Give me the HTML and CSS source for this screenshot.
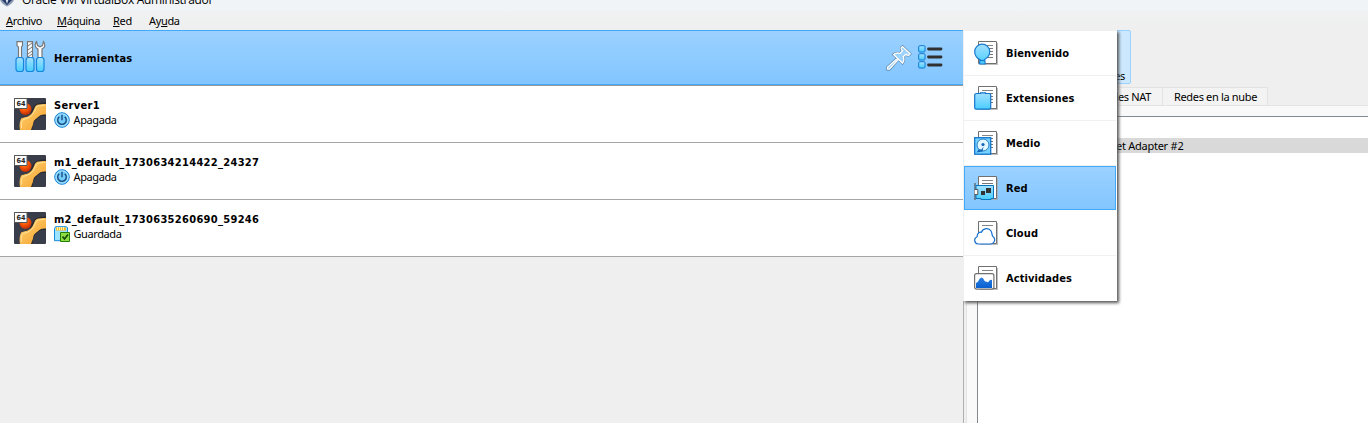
FILE: index.html
```html
<!DOCTYPE html>
<html lang="es">
<head>
<meta charset="utf-8">
<title>Oracle VM VirtualBox Administrador</title>
<link rel="stylesheet" href="styles.css">
</head>
<body>
<svg class="defs" width="0" height="0">
  <defs>
    <linearGradient id="aqua" x1="0" y1="0" x2="0" y2="1"><stop offset="0" stop-color="#a4e0ff"/><stop offset="1" stop-color="#48ceff"/></linearGradient>
    <linearGradient id="gold" x1="0" y1="0" x2="1" y2="1"><stop offset="0" stop-color="#ffd879"/><stop offset="1" stop-color="#f59d28"/></linearGradient>
    <linearGradient id="wave" x1="0" y1="0" x2="0" y2="1"><stop offset="0" stop-color="#2b7de0"/><stop offset="1" stop-color="#0860d0"/></linearGradient>
    <radialGradient id="ball" cx=".4" cy=".3" r=".7"><stop offset="0" stop-color="#ff9a3e"/><stop offset=".5" stop-color="#fb5607"/><stop offset="1" stop-color="#bd2f05"/></radialGradient>
    <symbol id="page" viewBox="0 0 24 24">
      <path d="M6 2h18v22H6z" fill="#aaa" opacity=".75"/>
      <path d="M4.500 .5h18v22h-18z" fill="#fff" stroke="#707070"/>
      <path d="M8 4.500h11" stroke="#858585"/>
    </symbol>
    <symbol id="os" viewBox="0 0 32 32">
      <rect width="32" height="32" rx="1" fill="#393d49"/>
      <circle cx="11.500" cy="11" r="6" fill="url(#ball)"/>
      <path d="M6 32C5 24 7 20 12 19C17 18 17 12 20 8C23 5 28 4.500 32 4.500V18C27 17 25 19 22 22C18 25 20 28 18 32Z" fill="#191b20" opacity=".6"/>
      <path d="M6 32C5 27 6 21 8 20C12 19 15 19 18 15C21 11 20 7 25 6.500C28 6 30 6 32 6V16.500C28 16 26 17 23 20C18 23 20 26 18 29L17 32Z" fill="url(#gold)"/>
      <path d="M7.500 30C7 24 8 21.500 11 21C19 19 20 14 22 10C24 7 27 8 31 7.500" fill="none" stroke="#ffe7a0" stroke-width=".9"/>
      <path d="M.5.500h12.500v10H.5z" fill="#fff" stroke="#555"/>
      <text class="badge" x="2.500" y="8" textLength="9" lengthAdjust="spacingAndGlyphs">64</text>
    </symbol>
    <symbol id="power" viewBox="0 0 16 16">
      <circle cx="8" cy="8" r="7.300" fill="#75cdfb" stroke="#1680d7"/>
      <circle cx="8" cy="8" r="6.100" fill="none" stroke="#b8eaff" stroke-width=".8"/>
      <path d="M5.300 4.700a4.300 4.300 0 1 0 5.400 0M8 2.800v5.400" fill="none" stroke="#174a83" stroke-width="1.400"/>
    </symbol>
  </defs>
</svg>
<div class="window">
  <header class="titlebar">
    <svg class="logo" width="14" height="15" viewBox="0 0 14 15"><path d="M0 2 7 0l7 2v6c-1 3-4 5-7 6.500C4 13 1 11 0 8Z" fill="#8d9bb5"/><path d="M2 3h10v5L7 13 2 8Z" fill="#203765"/><path d="M5 6h4l-2 6Z" fill="#d8e2f1"/></svg>
    <span class="title">Oracle VM VirtualBox Administrador</span>
  </header>
  <nav class="menubar">
    <span class="m-file"><u>A</u>rchivo</span><span class="m-machine"><u>M</u>áquina</span><span class="m-net"><u>R</u>ed</span><span class="m-help">Ay<u>u</u>da</span>
  </nav>
  <main class="workspace">
    <section class="machines">
      <div class="tools">
        <svg class="tools-icon" width="32" height="34" viewBox="0 0 32 34">
          <g fill="#fff" stroke="#777" stroke-width="1.200">
            <path d="M2 1.600h5.500v4L6.500 7v11h-3V7L2 5.600Z"/>
            <path d="M12.500 1.600h5v16h-5z"/>
            <path d="M21.500 1.600c-2 2-2 6 1.500 7.500V18h4V9c3.500-1.500 3.500-5 1.500-7.400l-1 4-2.500 1.200-2.500-1.200Z"/>
          </g>
          <path d="m13 6 4-3m-4 7 4-3m-4 7 4-3m-4 6 4-3" stroke="#777"/>
          <g fill="url(#aqua)" stroke="#1686dd" stroke-width="1.200"><rect x="1" y="17.500" width="7.500" height="14" rx="2.500"/><rect x="11" y="17.500" width="8" height="14" rx="2.500"/><rect x="21.500" y="17.500" width="7.500" height="14" rx="2.500"/></g>
        </svg>
        <b class="tools-label">Herramientas</b>
        <svg class="pin" width="26" height="26" viewBox="0 0 26 26"><path d="M16.500 1.500c-2 1-1.800 3 0 4.300L14 8.500c-2.500-1-4.500-.5-6.500 1l4 3.700-10 9v2h2l9-10 4 4c1.500-2 2-4 .8-6.500l2.700-2.500c1.500 1.600 3.300 1.500 4.200-.2Z" fill="#add9fb" stroke="#52789b" stroke-width="2.400"/><path d="M16.500 1.500c-2 1-1.800 3 0 4.300L14 8.500c-2.500-1-4.500-.5-6.500 1l4 3.700-10 9v2h2l9-10 4 4c1.500-2 2-4 .8-6.500l2.700-2.500c1.500 1.600 3.300 1.500 4.200-.2Z" fill="#9cd2fe" stroke="#fff" stroke-width="1.300"/></svg>
        <svg class="list-icon" width="26" height="24" viewBox="0 0 26 24"><g fill="url(#aqua)" stroke="#1178d2"><rect x=".7" y=".7" width="6.300" height="6.300" rx="1"/><rect x=".7" y="8.700" width="6.300" height="6.300" rx="1"/><rect x=".7" y="16.700" width="6.300" height="6.300" rx="1"/></g><path d="M10.500 4h12.500M10.500 12h12.500M10.500 20h12.500" stroke="#303030" stroke-width="2.800" stroke-linecap="round"/></svg>
      </div>
      <article class="vm"><svg width="32" height="32"><use href="#os"/></svg><div class="vm-info"><b>Server1</b><div class="state"><svg width="16" height="16"><use href="#power"/></svg><span>Apagada</span></div></div></article>
      <article class="vm"><svg width="32" height="32"><use href="#os"/></svg><div class="vm-info"><b>m1_default_1730634214422_24327</b><div class="state"><svg width="16" height="16"><use href="#power"/></svg><span>Apagada</span></div></div></article>
      <article class="vm"><svg width="32" height="32"><use href="#os"/></svg><div class="vm-info"><b>m2_default_1730635260690_59246</b><div class="state"><svg width="16" height="16" viewBox="0 0 16 16"><path d="M1.500.7h11l1 1v13h-13v-12Z" fill="#9be3ff" stroke="#168bdd"/><path d="M2 1.500h10v3H2z" fill="#f9b91c"/><path d="M3.500 1v3m2-3v3m2-3v3m2-3v3" stroke="#fff2ad"/><path d="M6.500 6.500h9v9h-9z" fill="#8ce044" stroke="#267d06"/><path d="m8.500 10.500 2 2.500 3.500-4.500" fill="none" stroke="#174709" stroke-width="1.700"/></svg><span>Guardada</span></div></div></article>
    </section>
    <section class="details">
      <div class="toolbar"><div class="tool-button">Propiedades</div></div>
      <div class="tabs"><span class="tab nat">Redes NAT</span><span class="tab cloud-tab">Redes en la nube</span></div>
      <div class="tab-pane"><div class="network-list"><div class="selected-network">Ethernet Adapter #2</div></div></div>
    </section>
  </main>
</div>
<div class="popup">
  <div class="item"><svg width="24" height="24" viewBox="0 0 24 24"><use href="#page"/><path d="M12 7.500h7M14 10.500h5M14 13.500h5M13 16.500h6" stroke="#777"/><path d="M5.500 18.500C2 16.500.7 13.500.7 10.500a7.500 7.300 0 0 1 15 0c0 3-1.500 6-5 8l.5 4.500H5.500l.5-4.500Z" fill="url(#aqua)" stroke="#197bce" stroke-width="1.200"/><path d="M5.500 19.500H11" stroke="#197bce" stroke-width="1.400"/></svg><b>Bienvenido</b></div>
  <div class="item"><svg width="24" height="24" viewBox="0 0 24 24"><use href="#page"/><path d="M14 7.500h5m-2 3h2m-2 3h2m-2 3h2" stroke="#777"/><path d="M2.500 7.500h4v-.7h5v.7H15q1.700 0 1.700 1.500v12.500q0 1.700-1.700 1.700H2q-1.300 0-1.300-1.700V9q0-1.500 1.800-1.500Z" fill="url(#aqua)" stroke="#1675cb" stroke-width="1.200"/></svg><b>Extensiones</b></div>
  <div class="item"><svg width="24" height="24" viewBox="0 0 24 24"><use href="#page"/><path d="M17 7.500h2m-2 3h2m-2 3h2m-2 3h2" stroke="#777"/><rect x=".7" y="6.700" width="16" height="16.500" fill="#76d3ff" stroke="#1675cb" stroke-width="1.300"/><circle cx="9" cy="14" r="6" fill="#e1f6ff" stroke="#277fcb"/><circle cx="9" cy="13.500" r="1.600" fill="#1265b5"/><path d="m2.500 21.500 2-3h3l2-3-1 5-3 .5Z" fill="#1265b5"/></svg><b>Medio</b></div>
  <div class="item selected"><svg width="24" height="24" viewBox="0 0 24 24"><use href="#page"/><path d="M8 7.500h11" stroke="#777"/><path d="M1 7v17" stroke="#555" stroke-width="1.200"/><path d="M2 9.500h17.500v13H17v1H7v-1H2Z" fill="url(#aqua)" stroke="#0874bb"/><path d="M.8 13.500h3v5h-3" fill="#fff" stroke="#555"/><path d="M7 15h4v4H7zM12 12h5v5h-5z" fill="#333"/></svg><b>Red</b></div>
  <div class="item"><svg width="24" height="24" viewBox="0 0 24 24"><use href="#page"/><path d="M4 23c-4-.5-4.500-6-.8-7.300-.2-3 2-5 4.300-4.500C9 6.800 15 6.500 17 10c1.500 2.500.5 4 2 5.500 3.500 3 .8 7.500-2.500 7.500Z" fill="#fff" stroke="#1770cf" stroke-width="1.200"/></svg><b>Cloud</b></div>
  <div class="item"><svg width="24" height="24" viewBox="0 0 24 24"><use href="#page"/><rect x=".6" y="7.600" width="19.300" height="15.500" rx="2" fill="#fff" stroke="#707070" stroke-width="1.200"/><path d="M2 22v-5q2-.5 3.500-4 2-3 4 0 1.500 3.500 3 2.500 1.500 2 3-1 1-1 2.500-.5v8Z" fill="url(#wave)"/></svg><b>Actividades</b></div>
</div>
</body>
</html>
```
FILE: styles.css
```css
* { box-sizing: border-box; }
body { margin: 0; width: 1368px; height: 423px; overflow: hidden; position: relative; background: #efefef; color: #000; font: 11px/15px "DejaVu Sans Condensed", "DejaVu Sans", sans-serif; }
svg { display: block; flex: none; }
b, span { white-space: nowrap; }
.defs { position: absolute; }
.badge { font: bold 7px "DejaVu Sans", sans-serif; fill: #222; }
.window { height: 423px; display: flex; flex-direction: column; }
.titlebar { height: 11px; display: flex; overflow: hidden; background: #f0f4f6; flex: none; }
.logo { margin: -8px 8px 0 0; }
.title { font: 12px/16px "Open Sans", sans-serif; margin-top: -8px; letter-spacing: -.32px; }
.menubar { height: 19px; display: flex; flex: none; padding: 2px 0 0 6px; background: linear-gradient(#f0f1f2, #efefef); }
.menubar, .state span, .details { font-family: "Noto Sans", sans-serif; letter-spacing: -.34px; }
.menubar u { text-underline-offset: 1px; }
.m-file { width: 51px; }
.m-machine { width: 56px; }
.m-net { width: 36px; }
.workspace { display: flex; flex: 1; min-height: 0; }
.machines { width: 963px; background: #efefef; }
.tools { height: 56px; display: flex; background: linear-gradient(#9bd1ff, #81c5ff); border-top: 1px solid #42a9f9; border-bottom: 1px solid #999; box-shadow: inset 0 -1px #42a9f9; }
.tools-icon { margin: 9px 8px 0 15px; width: 32px; }
.tools-label { width: 832px; margin: 20px 0 0 -1px; letter-spacing: .18px; }
.pin { margin-top: 14px; width: 26px; }
.list-icon { margin: 14px 0 0 5.500px; }
.vm { height: 57px; display: flex; gap: 8px; padding: 12px 14px; background: #fff; border-bottom: 1px solid #a5a5a5; }
.vm-info b { display: block; height: 14px; line-height: 15px; letter-spacing: .31px; }
.state { display: flex; height: 16px; gap: 3.500px; line-height: 16px; }
.state span { letter-spacing: -.4px; }
.details { width: 405px; background: #efefef; border-left: 1px solid #b0b0b0; }
.toolbar { height: 57px; padding-left: 70px; }
.tool-button { width: 97px; height: 54px; padding: 37px 5px 0 0; text-align: right; background: #cce8ff; border: 1px solid #99d1ff; border-radius: 2px; }
.tabs { display: flex; height: 18px; padding-left: 110px; }
.tab { height: 18px; padding-right: 11px; border-top: 1px solid #e2e2e2; border-right: 1px solid #e2e2e2; background: #f3f3f3; line-height: 17px; text-align: right; }
.nat { width: 89px; }
.cloud-tab { width: 105px; padding-right: 10px; }
.tab-pane { height: 318px; padding: 10px 0 0 10px; margin-left: 2px; border-top: 1px solid #e3e3e3; border-left: 1px solid #e3e3e3; background: #f9f9f9; }
.network-list { height: 311px; padding-top: 21px; background: #fff; border-top: 1px solid #828790; border-left: 1px solid #828790; }
.selected-network { height: 15px; padding-left: 105px; background: #d9d9d9; line-height: 16px; white-space: nowrap; letter-spacing: -.25px; }
/* The tools menu floats over both panes. */
.popup { position: absolute; left: 963px; top: 30px; width: 154px; height: 271px; padding: 0 1px 0 0; background: #fff; border-top: 1px solid #f0f0f0; border-left: 1px solid #f0f0f0; box-shadow: 2px 2px 3px #555; clip-path: inset(0 -5px -5px 0); }
.item { height: 45px; display: flex; gap: 8px; padding: 10px 0 0 10px; border-bottom: 1px solid #f0f0f0; line-height: 25px; letter-spacing: .1px; }
.item:last-child { border-bottom: 0; }
.selected { height: 44px; margin-bottom: 1px; background: linear-gradient(#9bd1ff, #83c6ff); border: 1px solid #42a9f9; padding: 9px 0 0 9px; }
```
